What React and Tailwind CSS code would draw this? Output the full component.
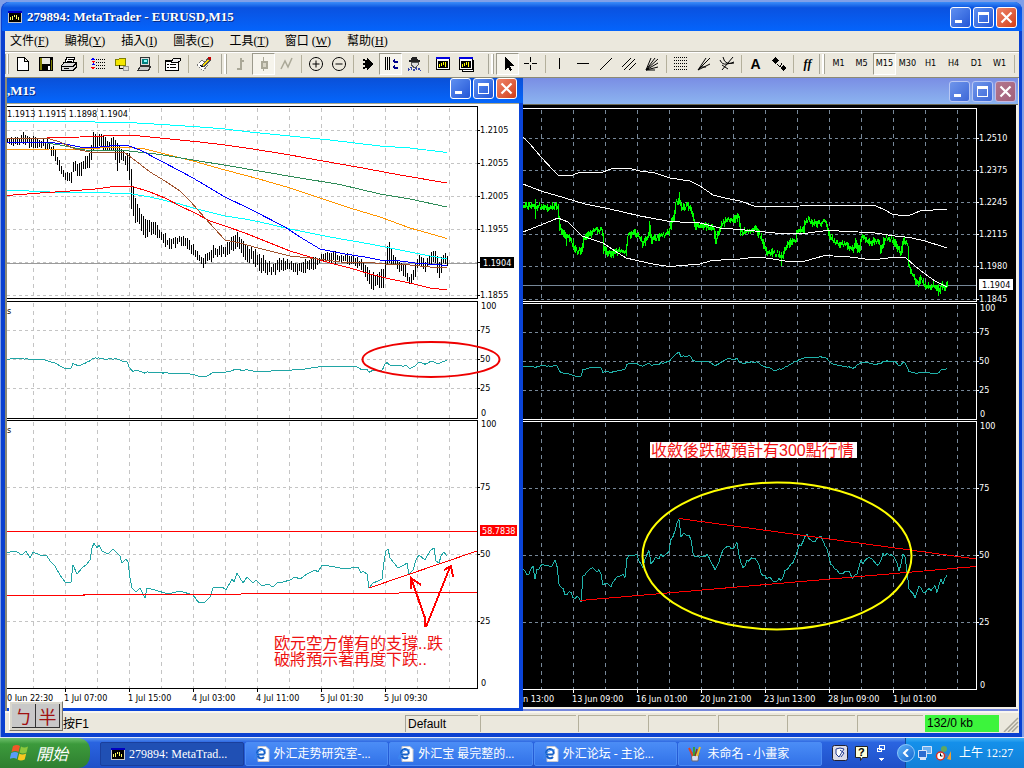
import React from "react";

/* ---------- chart helpers ---------- */

const pts = (s) => s.trim().split(/\s+/).map((p) => p.split(",").map(Number));

const at = (rows, x) => {
  for (let i = 1; i < rows.length; i++) {
    if (x <= rows[i][0]) {
      const a = rows[i - 1];
      const b = rows[i];
      const t = (x - a[0]) / (b[0] - a[0]);
      return a.map((v, k) => v + (b[k] - v) * t);
    }
  }
  return rows[rows.length - 1];
};

const noise = (n) => {
  const v = Math.sin(n * 12.9898 + 4.1) * 43758.5453;
  return (v - Math.floor(v)) * 2 - 1;
};

const bars = (rows, step, jitter) => {
  const [start] = rows[0];
  const [end] = rows[rows.length - 1];
  let d = "";
  for (let x = start; x <= end; x += step) {
    const [, hi, lo] = at(rows, x);
    const top = Math.round(hi + noise(x) * jitter);
    const bottom = Math.round(lo + noise(x + 0.37) * jitter);
    d += `M${x + 0.5} ${top}V${Math.max(bottom, top + 3)}`;
  }
  return d;
};

/* one bar per pixel, each joined to the one before it */
const joinedBars = (rows, jitter) => {
  const [start] = rows[0];
  const [end] = rows[rows.length - 1];
  let previous = rows[0][1];
  let d = "";
  for (let x = start; x <= end; x += 1) {
    const y = at(rows, x)[1];
    const top = Math.min(previous, y) - 2 + noise(x) * jitter;
    const bottom = Math.max(previous, y) + 2 + noise(x + 0.37) * jitter;
    d += `M${x + 0.5} ${Math.round(top)}V${Math.round(Math.max(bottom, top + 3))}`;
    previous = y;
  }
  return d;
};

const wiggle = (rows, jitter) => {
  const [start] = rows[0];
  const [end] = rows[rows.length - 1];
  let d = "";
  for (let x = start; x <= end; x += 2) {
    const [, y] = at(rows, x);
    d += `${d ? "L" : "M"}${x} ${(y + noise(x + 0.71) * jitter).toFixed(1)}`;
  }
  return d;
};

const range = (from, to, step) => {
  const out = [];
  for (let v = from; v <= to; v += step) out.push(v);
  return out;
};

const Line = ({ p, color, width = 1 }) => (
  <polyline points={p} fill="none" stroke={color} strokeWidth={width} />
);

const labelFont = "font-['DejaVu_Sans_Condensed','DejaVu_Sans','Noto_Sans',sans-serif] text-[9px]";

function Frame({ panels, left, right, grid, ink, columns, ticks, rows }) {
  return (
    <>
      <g stroke={grid} strokeDasharray="4 4">
        {columns.map((x) =>
          panels.map(([t, b]) => <path key={x + "-" + t} d={`M${x + 0.5} ${t + 2}V${b}`} />)
        )}
        {rows.map(([y]) => (
          <path key={y} d={`M${left} ${y + 0.5}H${right}`} strokeDasharray="3 3" />
        ))}
      </g>
      <g stroke={ink} fill="none">
        {panels.map(([t, b]) => (
          <path key={t} d={`M${left} ${t + 0.5}H${right + 0.5}V${b + 0.5}H${left}`} />
        ))}
        {rows.map(([y]) => (
          <path key={y} d={`M${right} ${y + 0.5}h3`} />
        ))}
        {ticks.map((x) => (
          <path key={x} d={`M${x + 0.5} ${panels[2][1]}v4`} />
        ))}
      </g>
      <g fill={ink} className={labelFont}>
        {rows.map(([y, label]) => label && (
          <text key={y} x={right + 3} y={y + 3}>{label}</text>
        ))}
      </g>
    </>
  );
}

/* ---------- EURUSD M15 data ---------- */

const m15Bars = pts(`7,136,143 12,139,147 20,137,145 24,132,143 30,138,147 40,139,146 48,141,150 55,150,160
 61,164,175 65,172,180 71,172,182 74,158,168 79,165,178 85,158,168 90,152,166 93,130,148 97,134,148 101,133,146
 106,140,152 113,139,152 117,142,170 120,146,160 126,155,165 129,155,180 131,170,210 134,195,222 140,212,225
 144,218,238 150,220,232 160,229,240 168,240,248 180,236,244 190,242,251 197,250,260 202,258,266 208,255,263
 214,246,256 225,248,257 231,236,252 238,234,248 243,242,258 252,249,262 260,255,271 272,266,275 280,258,270
 290,262,271 300,263,273 315,258,268 323,254,262 335,253,262 355,256,264 362,262,272 368,268,280 370,274,289
 378,275,287 384,267,286 386,250,270 388,242,262 391,250,263 397,259,270 405,266,276 410,278,287 415,264,275
 420,255,263 425,262,272 431,250,262 434,248,258 439,262,280 443,254,265 447,255,267`);

const m15Lines = [
  ["#00ffff", "7,121.5 60,121.5 129,122.5 170,125 200,127 225,129 250,132 290,136 330,140 380,146 410,148 447,152.5"],
  ["#ff0000", "7,139 30,138.5 80,137 115,135.5 135,135.5 170,139 200,142 225,145 250,148.5 290,155 320,160.5 360,167.5 400,175 447,183"],
  ["#ff9500", "7,150 50,149 80,149 110,147.5 130,147.5 145,149 161,153 193,161 225,170 259,179 290,188 320,198 350,208 380,217 410,228 447,238.5"],
  ["#2e8b57", "7,142 40,142 60,145 85,150 129,151 160,154.5 193,160 230,166 259,171 300,178 340,184.5 380,194 410,199 447,207"],
  ["#00ffff", "7,190 50,192 90,192.5 129,193.5 150,197 180,204 193,208 225,216 245,219 260,222 290,229 330,237 370,244 400,250 430,256 447,259"],
  ["#ff0000", "7,195.5 40,193 70,191 95,189 118,186 131,186 150,192 165,198 180,206 195,213 210,221 225,226 245,233 260,239 290,251 310,257 330,263 350,268 370,274 390,279 410,283 430,288 447,290"],
  ["#0000ff", "7,142 50,142.5 65,144 80,147 100,147 115,145.5 129,146 140,150 161,161 180,171 193,178 225,197 250,209 285,227 300,237 320,249 345,254 365,257 382,260.5 400,261 415,263 447,265.5"],
  ["#a0522d", "7,138.5 50,139 60,142 75,149 90,152 110,152 125,153 132,158 150,172 165,181 180,191 190,201 205,218 215,229 225,240 240,243 258,248 270,251 290,256 310,258 340,262 370,262.5 385,264 410,265 430,267 447,267"],
];

const m15Rsi = pts(`7,359.5 15,358.5 30,359 45,360 50,362 55,363 60,366 66,368.5 71,368 73,363.5 78,366 85,363 90,361
 94,357.5 105,359 118,359 122,361 127,362 129,367 132,371 140,371 146,374 147,372 165,373 190,374 200,376.5 207,376
 213,372.5 227,372 237,369 243,371 247,369.5 255,371.5 265,371 285,370.5 300,369.5 325,366 357,367 362,370 367,369
 369,372 375,370 382,371 386,362 390,365 400,366 407,366 410,369 415,366 419,362 425,364 432,361 438,364 444,361 447,361`);

const m15Rsi2 = `7,553 13,551 17,552 22,555 26,551 30,558 33,552 40,555 47,556 50,561 55,566 60,575 65,582 71,582 73,565
 77,574 82,568 87,564 90,560 92,548 94,543 97,548 99,545 102,551 108,554 113,549 117,553 120,556 122,563 126,559
 128,562 130,578 132,588 136,592 140,588 145,598 147,588 155,590 168,594 180,591 193,595 199,603 205,602 210,597
 213,588 222,587 226,590 232,579 234,582 237,573 243,583 247,577 253,583 256,580 262,586 268,584 273,587 277,583
 283,582 290,580 295,577 300,579 307,574 315,570 318,572 322,565 335,567 345,569 358,567 361,573 363,571 367,574
 369,588 373,583 378,581 382,579 384,562 386,551 388,549 390,558 394,563 398,568 404,565 407,563 409,574 413,570
 416,560 419,555 425,560 430,551 434,548 436,561 439,563 441,556 444,552 447,556`;

function M15Chart() {
  return (
    <svg viewBox="7 104 512 604" className="block h-auto w-full bg-white" shapeRendering="crispEdges" role="img" aria-label="EURUSD M15">
      <Frame
        panels={[[106, 298], [301, 418], [420, 688]]}
        left={7}
        right={477}
        grid="#c4c4c4"
        ink="#000000"
        columns={range(33, 449, 32)}
        ticks={range(65, 385, 64)}
        rows={[
          [130, "1.2105"], [163, "1.2055"], [196, "1.2005"], [229, "1.1955"], [262, ""], [295, "1.1855"],
          [330, "75"], [359, "50"], [388, "25"], [487, "75"], [554, "50"], [621, "25"],
        ]}
      />
      <path d="M7 263.5H477" stroke="#9a9a9a" />
      <g className={labelFont}>
        <text x="7" y="117">1.1913 1.1915 1.1898 1.1904</text>
        <text x="7" y="314">s</text>
        <text x="7" y="433">s</text>
        <text x="481" y="309">100</text>
        <text x="481" y="416">0</text>
        <text x="481" y="427">100</text>
        <text x="481" y="686">0</text>
        <text x="7" y="701">0 Jun 22:30</text>
        <text x="64" y="701">1 Jul 07:00</text>
        <text x="128" y="701">1 Jul 15:00</text>
        <text x="192" y="701">4 Jul 03:00</text>
        <text x="256" y="701">4 Jul 11:00</text>
        <text x="320" y="701">5 Jul 01:30</text>
        <text x="384" y="701">5 Jul 09:30</text>
      </g>
      <path d={bars(m15Bars, 2, 2.5)} stroke="#000000" />
      {m15Lines.map(([c, p], i) => <Line key={i} color={c} p={p} />)}
      <rect x="480" y="257" width="34" height="11" fill="#000000" />
      <text x="483" y="266" fill="#ffffff" className={labelFont}>1.1904</text>
      <path d={wiggle(m15Rsi, 0.3)} fill="none" stroke="#20a5a5" />
      <Line color="#20a5a5" p={m15Rsi2} />
      <g stroke="#ff0000" fill="none">
        <path d="M7 531.5H477M7 595.5L477 592.5M369 588L477 551" />
        <path strokeWidth="2" d="M425 627V618L411 578M411 589V578L421 585M426 627L450 567M444 570L451 566L453 577" />
        <path d="M402 633.5h4" />
      </g>
      <ellipse cx="431" cy="359.5" rx="68.5" ry="17.5" fill="none" stroke="#ee0000" strokeWidth="2" shapeRendering="auto" />
      <rect x="480" y="525" width="37" height="11" fill="#ff0000" />
      <text x="482" y="534" fill="#ffffff" className={labelFont}>58.7838</text>
      <g fill="#ee1111" className="font-['Liberation_Sans','Noto_Sans_CJK_TC',sans-serif] text-base">
        <text x="274" y="649">欧元空方僅有的支撐..跌</text>
        <text x="274" y="665">破將預示著再度下跌..</text>
      </g>
    </svg>
  );
}

/* ---------- H4 data ---------- */

const h4Price = pts(`523,205 535,206 545,208 555,205 557,207 559,228 562,233 568,237 575,250 581,252 583,238 590,234
 593,230 601,230 602,235 603,250 611,255 618,251 625,252 627,236 633,232 638,236 642,244 647,238 649,228 651,240
 660,236 668,233 672,218 673,220 675,202 679,201 681,208 687,206 691,211 694,226 705,226 713,229 715,240 722,223 728,219
 733,220 738,217 740,232 748,231 755,229 760,237 765,251 773,253 782,255 786,245 795,240 796,230 803,230 804,222 808,220
 812,224 825,222 829,235 835,244 845,244 852,250 855,242 858,252 861,237 870,242 878,240 880,250 884,238 892,240
 897,248 900,253 903,240 906,243 907,246 908,266 912,275 917,284 920,278 925,287 935,285 938,292 941,285 945,288 947,284`);

const h4Bands = [
  "523,137 530,144 541,157 553,170 558,175 566,176 573,175 580,172 603,172 612,168.5 630,168.5 640,171 655,173 670,178 690,181 700,186 713,195 725,198 740,201 757,207 780,206.5 820,205.5 875,205.5 885,210 893,214.5 908,216 920,211 947,209",
  "523,184 541,191 565,198 585,204 610,209 640,216 670,221.5 700,223 720,228 740,229.5 765,232 780,233.5 800,234 827,230.5 850,231.5 875,233 895,236 910,237.5 925,241 947,248",
  "523,232 541,225 558,218 568,222 582,236 603,243 615,251 626,258 655,264.5 670,266.5 700,264 712,260.5 740,259 757,257 770,258.5 785,261 805,261 825,255.5 850,257 873,260 895,257 906,258 915,266 925,274 935,281 947,287",
];

const h4Rsi = pts(`523,367 530,366 535,367 545,365.5 557,366 560,373 570,374 577,377 581,376 583,370 590,368 600,367
 603,372 615,372 625,369 627,364 635,363 642,367 649,363 652,365 668,362 672,359 676,354 679,352 681,356 690,356
 694,361 710,362 715,366 722,361 728,359 737,359 740,363 757,362 765,367 775,370 782,369 790,364 797,361 804,357
 812,358 825,357 832,364 840,366 855,368 860,362 870,363 880,364 884,361 895,362 900,367 903,362 906,363 908,371
 917,373 922,372 938,374 941,370 947,369`);

const h4Rsi2 = pts(`523,569 528,574 531,569 534,567 535,577 537,569 541,567 547,564 550,566 555,562 557,567 559,586
 563,590 567,596 570,589 574,600 577,596 581,601 583,577 590,570 593,568 597,571 600,567 602,584 611,585 617,578
 622,574 625,577 626,557 632,556 636,554 640,564 643,568 645,560 649,550 651,562 660,556 668,554 671,541 674,537
 676,525 679,519 681,535 686,533 691,540 694,557 700,556 708,556 712,563 715,570 719,560 722,550 728,547 733,549
 736,544 738,545 740,563 743,566 749,560 755,558 759,565 761,572 766,578 774,580 781,580 785,571 790,564 795,560
 798,547 802,544 804,535 808,535 812,544 816,540 822,537 827,550 831,564 836,570 842,575 848,571 853,577 858,575
 860,555 863,564 867,558 872,557 879,566 882,555 888,554 893,556 897,565 900,574 902,553 906,557 908,586 915,596
 919,586 925,593 930,589 935,587 938,595 940,577 943,584 945,578 947,576`);

function H4Chart() {
  return (
    <svg viewBox="523 105 493 602" className="block h-auto w-full bg-black" shapeRendering="crispEdges" role="img" aria-label="EURUSD H4">
      <Frame
        panels={[[108, 301], [303, 419], [421, 689]]}
        left={523}
        right={976}
        grid="#778899"
        ink="#ffffff"
        columns={range(541, 957, 32)}
        ticks={range(573, 893, 64)}
        rows={[
          [138, "1.2510"], [170, "1.2375"], [202, "1.2245"], [234, "1.2115"], [266, "1.1980"], [299, "1.1845"],
          [332, "75"], [361, "50"], [390, "25"], [488, "75"], [555, "50"], [622, "25"],
        ]}
      />
      <path d="M523 285.5H976" stroke="#778899" />
      <g fill="#ffffff" className={labelFont}>
        <text x="980" y="311">100</text>
        <text x="980" y="417">0</text>
        <text x="980" y="429">100</text>
        <text x="980" y="688">0</text>
        <text x="523" y="702">n 13:00</text>
        <text x="572" y="702">13 Jun 09:00</text>
        <text x="636" y="702">16 Jun 01:00</text>
        <text x="700" y="702">20 Jun 21:00</text>
        <text x="764" y="702">23 Jun 13:00</text>
        <text x="828" y="702">28 Jun 09:00</text>
        <text x="893" y="702">1 Jul 01:00</text>
      </g>
      <path d={joinedBars(h4Price, 2.5)} stroke="#00ff00" />
      <path d="M679.5 192V204M535.5 199V219M566.5 235V246M649.5 221V236M781.5 252V266M938.5 284V296" stroke="#00ff00" />
      {h4Bands.map((p, i) => <Line key={i} color="#ffffff" p={p} />)}
      <rect x="979" y="279" width="34" height="11" fill="#ffffff" />
      <text x="982" y="288" className={labelFont}>1.1904</text>
      <path d={wiggle(h4Rsi, 0.7)} fill="none" stroke="#20b2aa" />
      <path d={wiggle(h4Rsi2, 2)} fill="none" stroke="#20b2aa" />
      <path d="M679 518.5L976 559M580 600.5L976 566.5" stroke="#ff0000" />
      <ellipse cx="777" cy="556" rx="134.5" ry="73.5" fill="none" stroke="#ffff00" strokeWidth="2" shapeRendering="auto" />
      <rect x="650" y="442" width="207" height="16" fill="#ffffff" />
      <text x="651" y="456" fill="#ee1111" className="font-['Liberation_Sans','Noto_Sans_CJK_TC',sans-serif] text-base">
        收斂後跌破預計有300點行情
      </text>
    </svg>
  );
}

/* ---------- window chrome ---------- */

function Caption({ muted }) {
  const base = "flex size-[21px] items-center justify-center rounded-[3px] border ";
  const blue = muted
    ? "border-[#b9c8f4] bg-linear-to-br from-[#6f95ea] to-[#3f68d8]"
    : "border-white bg-linear-to-br from-[#5f8ff0] to-[#2456d6]";
  const red = muted
    ? "border-[#c4b9e0] bg-linear-to-br from-[#b3768c] to-[#a1607c]"
    : "border-white bg-linear-to-br from-[#ee8468] to-[#d23c12]";
  return (
    <div className="flex shrink-0 gap-0.5">
      <button type="button" aria-label="Minimize" className={base + blue}>
        <svg viewBox="0 0 19 19" className="size-[19px]"><path d="M4 12h7v3H4z" fill="#fff" /></svg>
      </button>
      <button type="button" aria-label="Maximize" className={base + blue}>
        <svg viewBox="0 0 19 19" className="size-[19px]" shapeRendering="crispEdges">
          <path d="M4 4h11v11H4zM5 7v7h9V7z" fill="#fff" fillRule="evenodd" />
        </svg>
      </button>
      <button type="button" aria-label="Close" className={base + red}>
        <svg viewBox="0 0 19 19" className="size-[19px]"><path d="M4.5 4.5l10 10M14.5 4.5l-10 10" stroke="#fff" strokeWidth="2.2" /></svg>
      </button>
    </div>
  );
}

const ChartIcon = () => (
  <svg viewBox="0 0 14 12" className="h-3 w-3.5 shrink-0" shapeRendering="crispEdges" aria-hidden="true">
    <path d="M0 0h14v12H0z" fill="#c8c8c8" />
    <path d="M0 0h14v2H0z" fill="#0000c0" />
    <path d="M1 2h12v9H1z" />
    <path d="M2.5 9V6M4.5 9V5M6.5 6V4M8.5 8V4M10.5 9V6" stroke="#ffff60" />
  </svg>
);

const menus = [["文件(", "F"], ["顯視(", "Y"], ["插入(", "I"], ["圖表(", "C"], ["工具(", "T"], ["窗口 (", "W"], ["幫助(", "H"]];

/* ---------- toolbar ---------- */

const S = { stroke: "#000", fill: "none" };
const chartGlyph = (
  <>
    <path d="M1 2h13v11H1z" fill="#fff" stroke="#000" />
    <path d="M1 1h14v2H1z" fill="#0000e0" />
    <path d="M3 5h10v7H3z" />
    <path d="M4.5 11V8M6.5 10V7M8.5 9V6M10.5 11V6" stroke="#ffff00" />
  </>
);

const icons = {
  new: <path d="M2.500 1.500h7l4 4v9h-11zM9.500 1.500v4h4" fill="#fff" stroke="#000" />,
  save: (<><path d="M1 1h14v14H1z" fill="#000" /><path d="M2 2h2v12H2zM13 4h1v10h-1z" fill="#808000" /><path d="M4 2h8v6H4z" fill="#e8e8e0" /><path d="M10 10h2v4h-2z" fill="#fff" /></>),
  print: (<><path d="M4 6l2-5h8l-2 5" fill="#fff" stroke="#000" /><path d="M.5 9.500l3-3.500h12v5l-3 3h-12z" fill="#ddd" stroke="#000" /><path d="M0 10.500h12l3-3M3 12.500h5M7 3.500h5M6 5h5" {...S} /></>),
  watch: (<><path d="M6 3.500h10M6 6.500h10M6 9.500h10M6 12.500h10" stroke="#000" strokeDasharray="1 1" /><path d="M1 4l2-3 2 3zM1 9l2-2 2 2z" fill="#00f" /><path d="M1 5h4l-2 2zM1 11h4l-2 3z" fill="#f00" /></>),
  folder: (<><path d="M2 3h4l1-1h5v7H2z" fill="#f4e600" stroke="#808000" /><path d="M6 9v3h4" {...S} /><path d="M10 10h5v4h-5z" fill="#ddd" stroke="#999" /></>),
  terminal: (<><path d="M4.500 1.500h9v8h-9z" fill="#ddd" stroke="#333" /><path d="M6 3h6v5H6z" fill="#008080" /><path d="M8 4h3v2H8z" fill="#8ff" /><path d="M1.500 14.500l3-4h10l-2 4z" fill="#ccc" stroke="#333" /></>),
  props: (<><path d="M.5 4.500h13v10H.5z" fill="#fff" stroke="#000" /><path d="M0 4h10v2H0z" /><path d="M2 8.500h2M5 8.500h6M2 11.500h2M5 11.500h6" stroke="#000" /><path d="M6 6l3-4h6v3l-4 2z" fill="#eee" stroke="#000" /></>),
  pencil: (<><path d="M1 9l5-5 6 5-5 6z" fill="#fff" stroke="#777" strokeDasharray="2 1" /><path d="M4 9l3 2" {...S} /><path d="M6 9.500l6-7 2 2-6 6z" fill="#ffe000" stroke="#555" /><path d="M12 1h3v3h-2z" fill="#c00000" /></>),
  bar: <path d="M7.500 2v12M7.500 4.500h3M4 12.500h3" stroke="#aaa898" fill="none" strokeWidth="2" />,
  candle: (<><path d="M7.500 1v14" stroke="#aaa898" /><path d="M5.500 5.500h5v6h-5z" fill="#d8d5c6" stroke="#aaa898" strokeWidth="2" /></>),
  line: <path d="M2 13l4-8 3 6 4-9" stroke="#aaa898" fill="none" strokeWidth="1.5" shapeRendering="auto" />,
  zoomin: <path d="M8 1.500a6.500 6.500 0 1 0 .01 0M4.500 8h7M8 4.500v7" {...S} shapeRendering="auto" />,
  zoomout: <path d="M8 1.500a6.500 6.500 0 1 0 .01 0M4.500 8h7" {...S} shapeRendering="auto" />,
  auto: <path d="M3 3h2v1h2V2l6 6-6 6v-2H5v1H3v-2h2V9H3V7h2V5H3z" />,
  shift: (<><path d="M2.500 1v13M4.500 1v13M6.500 1v13" {...S} /><path d="M9 5l3-3v6zM9 11l3-3v6z" fill="#00008b" /><path d="M12 5.500h3M12 11.500h3" stroke="#00008b" strokeWidth="2" /></>),
  expert: (<><path d="M5 4l1-3h5l1 3h2v2H3V4z" fill="#222" /><path d="M5 6h7v3l-3 3-4-3z" fill="#ddd" stroke="#555" /><path d="M2 14l3-2 3 2 3-2 4 2" stroke="#3344aa" fill="none" strokeWidth="2" strokeDasharray="2 1" /></>),
  chart1: chartGlyph,
  chart2: (<><path d="M4 4h11v11H4z" fill="#fff" stroke="#000" />{chartGlyph}</>),
  cursor: <path d="M5 1v13l3-3 2 4 2-1-2-4h4z" />,
  cross: <path d="M7.500 1v5M7.500 9v5M1 7.500h5M9 7.500h5" {...S} />,
  vline: <path d="M7.500 2v11" {...S} />,
  hline: <path d="M2 7.500h12" {...S} />,
  trend: <path d="M2 14L14 2" {...S} />,
  channel: <path d="M1 11l9-9M3 14L14 3M8 14l7-7" {...S} />,
  fan: <path d="M2 14L7 2M2 14L11 2M2 14L14 3M2 14l12-7M2 14l12-3M2 14h9" {...S} shapeRendering="auto" />,
  fib: <path d="M1 1.500h14M1 4.500h14M1 7.500h14M1 10.500h14M1 13.500h14" stroke="#000" strokeDasharray="1 1" />,
  fan2: <path d="M2 14L14 2M2 14L10 2M2 14l12-6M5 11h5" {...S} shapeRendering="auto" />,
  arcs: <path d="M3 14L14 1M1 4q2 5 7 4t7-2M4 1q1 5 4 6t7 0M3 9l6 4" {...S} shapeRendering="auto" />,
  shapes: (<><path d="M4 1l4 4-4 3-3-3zM12 9l4 3-4 3-3-3z" /><path d="M6 8l3 3 2-4" {...S} /></>),
};

const Icon = ({ name }) => (
  <svg viewBox="0 0 16 16" className="size-4" shapeRendering="crispEdges" aria-hidden="true">{icons[name]}</svg>
);

const Sep = ({ wide }) => (
  <span className={(wide ? "w-2" : "w-1.5") + " flex shrink-0 justify-center"}>
    <span className="h-[18px] w-px bg-[#b4b09c]" />
  </span>
);

const Grip = ({ className }) => (
  <span className={"flex shrink-0 justify-end gap-0.5 pr-0.5 " + className}>
    <span className="h-5 w-px bg-[#a8a698]" />
    <span className="h-5 w-[3px] border-r border-[#a8a698] bg-white" />
  </span>
);

function Tool({ name, label, pressed, children }) {
  return (
    <button
      type="button"
      aria-label={label || name}
      className={
        "flex h-[22px] w-[23px] shrink-0 items-center justify-center border " +
        (pressed ? "border-t-[#9c9a8c] border-r-white border-b-white border-l-[#9c9a8c] bg-[#f6f4ec]" : "border-transparent")
      }
    >
      {children || <Icon name={name} />}
    </button>
  );
}

function Toolbar() {
  return (
    <div className="flex h-[25px] items-center overflow-hidden border-t border-white pb-0.5">
      <Grip className="w-1.5" />
      <Tool name="new" /><Tool name="save" /><Tool name="print" />
      <Sep />
      <Tool name="watch" /><Tool name="folder" /><Tool name="terminal" />
      <Sep />
      <Tool name="props" />
      <Sep wide />
      <Tool name="pencil" />
      <Grip className="w-3.5" />
      <Tool name="bar" /><Tool name="candle" pressed /><Tool name="line" />
      <Sep />
      <Tool name="zoomin" /><Tool name="zoomout" />
      <Sep />
      <Tool name="auto" /><Tool name="shift" pressed /><Tool name="expert" />
      <Sep />
      <Tool name="chart1" /><Tool name="chart2" />
      <Grip className="w-[19px]" />
      <Tool name="cursor" pressed /><Tool name="cross" />
      <Sep />
      <Tool name="vline" /><Tool name="hline" /><Tool name="trend" /><Tool name="channel" /><Tool name="fan" />
      <Sep />
      <Tool name="fib" /><Tool name="fan2" /><Tool name="arcs" />
      <Sep />
      <Tool label="Text"><span className="font-['Liberation_Sans',sans-serif] text-sm font-bold">A</span></Tool>
      <Tool name="shapes" />
      <Sep />
      <Tool label="Indicators"><span className="font-['Liberation_Serif',serif] text-xs font-bold italic">ff</span></Tool>
      <Grip className="w-2" />
      {["M1", "M5", "M15", "M30", "H1", "H4", "D1", "W1"].map((t) => (
        <Tool key={t} label={t} pressed={t === "M15"}>
          <span className={labelFont}>{t}</span>
        </Tool>
      ))}
      <Sep />
    </div>
  );
}

/* ---------- taskbar ---------- */

const IeIcon = () => (
  <svg viewBox="0 0 16 16" className="size-4 shrink-0" aria-hidden="true">
    <path d="M4 .5h8l3 3v12H4z" fill="#fff" stroke="#c8c8d0" />
    <path d="M10.500 8.500H3.500a3.800 3.800 0 1 1 7-.5M10 11a3.800 3.800 0 0 1-6.300-1" fill="none" stroke="#1560c8" strokeWidth="2" />
    <path d="M1 13C0 9 6 3 12 4" fill="none" stroke="#3c8cf0" />
  </svg>
);

const PaintIcon = () => (
  <svg viewBox="0 0 16 16" className="size-4 shrink-0" aria-hidden="true">
    <path d="M4 7h8l-1 8H5z" fill="#d8dcec" stroke="#667" />
    <path d="M2 2l4 8" stroke="#e04020" strokeWidth="2" />
    <path d="M7 1v9" stroke="#30a040" strokeWidth="2" />
    <path d="M13 1l-3 9" stroke="#f0c020" strokeWidth="2" />
    <path d="M10 3l-2 7" stroke="#804020" strokeWidth="1.5" />
  </svg>
);

const tasks = [
  ["279894: MetaTrad...", <ChartIcon />, true],
  ["外汇走势研究室-...", <IeIcon />],
  ["外汇宝 最完整的...", <IeIcon />],
  ["外汇论坛 - 主论...", <IeIcon />],
  ["未命名 - 小畫家", <PaintIcon />],
];

function Taskbar() {
  return (
    <footer className="flex h-[30px] items-stretch bg-linear-to-b from-[#5a94f0] via-[#2a64e0] via-15% to-[#1f50c8] font-['Liberation_Serif','Noto_Sans_CJK_TC','Noto_Sans_CJK_SC',serif] text-xs text-white">
      <button type="button" className="flex w-[90px] shrink-0 items-center gap-1.5 rounded-r-xl bg-linear-to-b from-[#6cc06a] via-[#3c9a3c] via-20% to-[#2f7f30] pl-2.5">
        <svg viewBox="0 0 20 18" className="h-[18px] w-5" aria-hidden="true">
          <path d="M3 2q4-2 7 0L8.500 8q-3-2-7 0z" fill="#f05828" />
          <path d="M11 2.500q3 2 7 0l-1.500 6q-4 2-7 0z" fill="#8cc83c" />
          <path d="M1.200 9q4-2 7 0l-1.500 6q-3-2-7 0z" fill="#5a9cf8" />
          <path d="M9.200 9.500q3 2 7 0l-1.500 6q-4 2-7 0z" fill="#f8c820" />
        </svg>
        <span className="font-['Noto_Sans_CJK_TC',sans-serif] text-base leading-none italic">開始</span>
      </button>
      <nav className="flex min-w-0 flex-1 gap-px pt-1 pb-0.5 pl-2.5">
        {tasks.map(([text, icon, active]) => (
          <button
            type="button"
            key={text}
            className={
              "flex min-w-0 flex-1 items-center gap-1 overflow-hidden rounded-[2px] border pr-1 pl-2 whitespace-nowrap " +
              (active ? "border-[#1a3f9c] bg-[#2050b4]" : "border-[#4c8cf4] bg-linear-to-b from-[#4a8cf6] to-[#3272e8]")
            }
          >
            <span className="flex w-4 shrink-0 justify-end">{icon}</span>
            {text}
          </button>
        ))}
      </nav>
      <div className="flex w-[83px] shrink-0 items-center gap-1.5 pl-2.5">
        <svg viewBox="0 0 16 16" className="size-4" aria-hidden="true">
          <rect x=".5" y=".5" width="15" height="15" rx="2" fill="#dcdce8" stroke="#223" />
          <path d="M4 4q4-2 8 0l-5 8-3-3zM8 5l4 3-3 4" fill="#fff" stroke="#223a90" />
        </svg>
        <svg viewBox="0 0 16 16" className="size-4" aria-hidden="true">
          <path d="M1.500 1.500h12v11h-5l-2 3v-3h-5z" fill="#ffffd8" stroke="#222" />
          <text x="4" y="11" className="font-['Liberation_Sans',sans-serif] text-[11px] font-bold">?</text>
        </svg>
        <svg viewBox="0 0 10 18" className="h-[18px] w-2.5 self-center" shapeRendering="crispEdges" aria-hidden="true">
          <path d="M3.500 1.500h5v4h-5zM1.500 4.500h4v3h-4z" fill="#2a64e0" stroke="#fff" />
          <path d="M2 14h6l-3 3z" fill="#fff" />
        </svg>
      </div>
      <div className="relative flex w-[119px] shrink-0 items-center gap-0.5 border-l border-[#104c9c] bg-linear-to-b from-[#3cb0f4] via-[#1490ea] via-15% to-[#1280d8] pl-[11px] whitespace-nowrap">
        <button type="button" aria-label="Show hidden icons" className="absolute top-1.5 -left-[9px] flex size-[18px] items-center justify-center rounded-full border border-[#8cc8fc] bg-linear-to-br from-[#5cb0f8] to-[#1468d0]">
          <svg viewBox="0 0 8 8" className="size-2"><path d="M6 0L2 4l4 4" fill="none" stroke="#fff" strokeWidth="2" /></svg>
        </button>
        <svg viewBox="0 0 16 16" className="size-4" aria-hidden="true">
          <path d="M5.500 1.500h9v7h-9z" fill="#6cb0f0" stroke="#d8e4f8" /><path d="M1.500 5.500h8v7h-8z" fill="#2c6cd0" stroke="#d8e4f8" /><path d="M3 14h6" stroke="#d8e4f8" strokeWidth="2" />
        </svg>
        <svg viewBox="0 0 18 16" className="h-4 w-[18px]" aria-hidden="true">
          <circle cx="9" cy="4" r="3" fill="#60a860" /><path d="M4 12q5-8 10 0z" fill="#5878b8" /><path d="M12 14l4-8v9z" fill="#f0a030" />
          <circle cx="5.500" cy="11" r="4" fill="#fff" stroke="#d83020" strokeWidth="1.500" /><path d="M5.500 8.500V11h2" stroke="#000" fill="none" />
        </svg>
        <time className="pl-1">上午 12:27</time>
      </div>
    </footer>
  );
}

/* ---------- page ---------- */

const statusCells = ["w-[98px]", "w-[70px]", "w-[70px]", "w-[69px]", "w-[70px]", "w-[68px]"];

export default function App() {
  return (
    <div className="flex min-h-screen flex-col bg-[#7f9fe8] pt-0.5">
      <main className="mr-0.5 ml-px flex flex-1 flex-col rounded-t-lg border-r-[3px] border-b-4 border-l-4 border-[#0a40d0] bg-[#0a48dc]">
        <header className="-mx-[3px] flex h-[29px] items-center gap-[5px] rounded-t-lg bg-linear-to-b from-[#3c8cf8] via-[#0a52e0] via-20% to-[#0464fc] pt-px pr-[5px] pl-1.5">
          <ChartIcon />
          <h1 className="flex-1 font-['Liberation_Serif',serif] text-[13px] font-bold text-white [text-shadow:1px_1px_#0a2a80]">
            279894: MetaTrader - EURUSD,M15
          </h1>
          <Caption />
        </header>

        <div className="flex flex-1 flex-col bg-[#ebe8dd]">
          <nav className="flex h-[21px] items-center gap-4 border-b border-[#a5a397] pb-px pl-[5px] font-['Liberation_Serif','Noto_Sans_CJK_TC',serif] text-xs text-black">
            {menus.map(([a, k]) => (
              <button type="button" key={k} className="whitespace-nowrap">{a}<u>{k}</u>)</button>
            ))}
          </nav>
          <Toolbar />

          <div className="grid grid-cols-[516fr_495fr] border-t border-l-2 border-[#8c8a76] pr-px">
            <section className="min-w-0 border-r-4 border-b-[3px] border-[#0a44d8] bg-white">
              <div className="-mr-1 flex h-[25px] items-start justify-between bg-linear-to-b from-[#0a50d8] to-[#0466fc] pr-1.5">
                <h2 className="self-center font-['Liberation_Serif',serif] text-[13px] font-bold text-white [text-shadow:1px_1px_#0a2a80]">,M15</h2>
                <Caption />
              </div>
              <div className="border-t border-[#aca88c]">
                <M15Chart />
              </div>
            </section>
            <section className="min-w-0 border-b-2 border-[#7688dc] bg-[#f2f0e8]">
              <div className="flex h-[26px] items-center justify-end bg-linear-to-b from-[#7a8ee4] to-[#8cb4f0] pr-0.5">
                <Caption muted />
              </div>
              <div className="border-t border-[#6c6a56] pr-0.5">
                <H4Chart />
              </div>
            </section>
          </div>

          <div className="relative flex h-[22px] items-end border-t-2 border-[#f8f6f0] pb-px font-['Liberation_Sans','Noto_Sans_CJK_TC',sans-serif] text-xs leading-4 text-black">
            <div className="flex-1 pl-[58px]">按F1</div>
            <div className="w-[75px] pr-0.5">
              <div className="h-[17px] border-t border-l border-[#a5a397] pl-0.5">Default</div>
            </div>
            {statusCells.map((w, i) => (
              <div key={i} className={w + " pr-0.5"}>
                <div className="h-[17px] border-t border-l border-[#b4b09c]" />
              </div>
            ))}
            <div className="h-[17px] w-[74px] bg-[#3cf43c] pl-0.5">132/0 kb</div>
            <svg viewBox="0 0 20 17" className="h-[17px] w-5" aria-hidden="true">
              <path d="M5 17L19 3M9 17L19 7M13 17l6-6" stroke="#a5a397" strokeWidth="1.500" />
            </svg>
            <div className="absolute -top-3 left-1 flex border border-t-white border-r-[#77756a] border-b-[#77756a] border-l-white bg-[#d8d6cc] p-0.5 font-['Noto_Sans_CJK_TC',sans-serif] text-lg text-[#a01010]">
              <button type="button" className="h-6 w-6 border-r border-b border-[#333] bg-[#c8c8c8] leading-6">ㄅ</button>
              <button type="button" className="h-6 w-6 border-r border-b border-[#333] bg-[#c8c8c8] leading-6">半</button>
            </div>
          </div>
        </div>
      </main>
      <div className="h-px bg-[#dfe6f8]" />
      <Taskbar />
    </div>
  );
}
